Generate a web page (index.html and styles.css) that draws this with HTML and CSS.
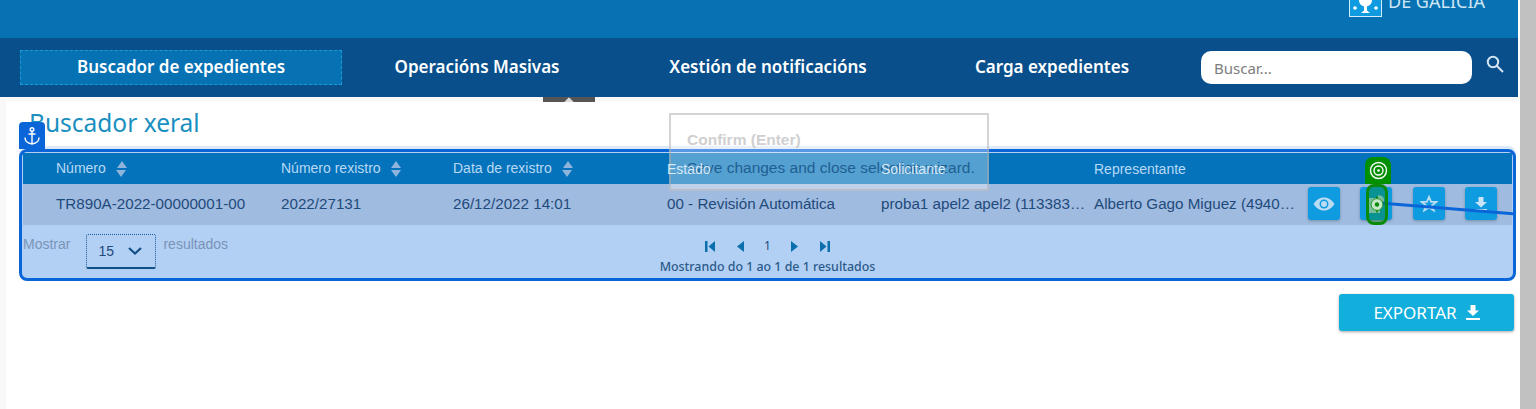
FILE: index.html
```html
<!DOCTYPE html>
<html lang="en">
<head>
    <meta charset="UTF-8">
    <meta name="viewport" content="width=device-width, initial-scale=1.0">
    <title>Buscador xeral</title>
    <link rel="stylesheet" href="styles.css">
</head>
<body>
    <div class="app">
        <div class="page">
            <header class="topbar">
                <svg class="logo" width="33" height="17" viewBox="0 0 33 17">
                    <rect x="0.5" y="-8" width="32" height="24.5" fill="#0f9be0" stroke="#d5ecf8"/>
                    <path d="M10 0h13c0 4-2.500 5.500-5 6.500v4l3 2.500h-9l3-2.500v-4C12.500 5.500 10 4 10 0z" fill="#fff"/>
                    <path d="M4 8h4M6 6v4M25 8h4M27 6v4" stroke="#fff" stroke-width="1.300"/>
                </svg>
                <span class="logo-text">DE GALICIA</span>
            </header>

            <nav class="mainnav">
                <a class="nav-item nav-active" href="#">Buscador de expedientes</a>
                <a class="nav-item nav-second" href="#">Operacións Masivas</a>
                <a class="nav-item nav-third" href="#">Xestión de notificacións</a>
                <a class="nav-item nav-fourth" href="#">Carga expedientes</a>
                <div class="search">
                    <input class="search-input" type="text" placeholder="Buscar...">
                    <svg class="search-icon" width="18" height="18" viewBox="0 0 18 18" fill="none" stroke="#d6e6f2" stroke-width="2">
                        <circle cx="7" cy="7" r="5.200"/>
                        <path d="M11 11l6 6"/>
                    </svg>
                </div>
            </nav>
            <div class="tab-handle"><span class="tab-handle-mark"></span></div>

            <div class="shell">
                <main class="content">
                    <h1 class="title">Buscador xeral</h1>
                    <div class="results">
                        <div class="anchor-badge">
                            <svg width="18" height="20" viewBox="0 0 18 20" fill="none" stroke="#fff" stroke-width="1.400">
                                <circle cx="9" cy="3.500" r="1.800"/>
                                <path d="M9 5.500V18M5.500 8h7M2 11.500c0 4 3.500 6 7 6.500 3.500-.5 7-2.500 7-6.500"/>
                            </svg>
                        </div>
                        <table class="grid">
                            <colgroup>
                                <col class="col-num">
                                <col class="col-reg">
                                <col class="col-date">
                                <col class="col-state">
                                <col class="col-sol">
                                <col class="col-rep">
                                <col class="col-actions">
                            </colgroup>
                            <thead>
                                <tr>
                                    <th class="first">Número <span class="sort"></span></th>
                                    <th>Número rexistro <span class="sort"></span></th>
                                    <th>Data de rexistro <span class="sort"></span></th>
                                    <th><span class="over-tour">Estado</span></th>
                                    <th><span class="over-tour">Solicitante</span></th>
                                    <th>Representante</th>
                                    <th></th>
                                </tr>
                            </thead>
                            <tbody>
                                <tr>
                                    <td class="first">TR890A-2022-00000001-00</td>
                                    <td>2022/27131</td>
                                    <td>26/12/2022 14:01</td>
                                    <td>00 - Revisión Automática</td>
                                    <td class="cut">proba1 apel2 apel2 (11338345K)</td>
                                    <td class="cut cut-rep">Alberto Gago Miguez (49401234)</td>
                                    <td>
                                        <div class="actions">
                                            <button class="act" type="button">
                                                <svg width="22" height="14" viewBox="0 0 22 14">
                                                    <path d="M0.500 7C4 1.800 7.500 0.500 11 0.500S18 1.800 21.500 7C18 12.200 14.500 13.500 11 13.500S4 12.200 0.500 7z" fill="#b9dcf3"/>
                                                    <circle cx="11" cy="7" r="4.500" fill="#0f9be0"/>
                                                    <circle cx="11" cy="7" r="3" fill="#b9dcf3"/>
                                                </svg>
                                            </button>
                                            <button class="act" type="button">
                                                <svg width="20" height="20" viewBox="0 0 20 20">
                                                    <path d="M1 4h13v15H1zM12 1.500a5 5 0 0 1 6 6l-6 2z" fill="#b9dcf3"/>
                                                </svg>
                                            </button>
                                            <button class="act" type="button">
                                                <svg width="18" height="18" viewBox="0 0 18 18">
                                                    <path d="M9 1.800l2.100 5h5.400l-4.300 3.400 1.600 5.300L9 12.400l-4.800 3.100 1.600-5.300L1.500 6.800h5.400z" fill="none" stroke="#b9dcf3" stroke-width="1.800"/>
                                                </svg>
                                            </button>
                                            <button class="act" type="button">
                                                <svg width="14" height="14" viewBox="0 0 14 14">
                                                    <path d="M4.500 0h5v5H13L7 10.500 1 5h3.500zM1 12h12v1.500H1z" fill="#c9e4f6"/>
                                                </svg>
                                            </button>
                                        </div>
                                    </td>
                                </tr>
                            </tbody>
                        </table>
                        <div class="grid-foot">
                            <div class="length">
                                <span>Mostrar</span>
                                <div class="length-select">
                                    15
                                    <svg width="14" height="8" viewBox="0 0 14 8" fill="none" stroke="#124f86" stroke-width="2.200">
                                        <path d="M1 1l6 5.500L13 1"/>
                                    </svg>
                                </div>
                                <span>resultados</span>
                            </div>
                            <div class="paging">
                                <div class="pager">
                                    <svg width="11" height="11" viewBox="0 0 11 11"><path d="M0 0h2.500v11H0zM10 0v11L3.500 5.500z" fill="#0b6fae"/></svg>
                                    <svg width="9" height="11" viewBox="0 0 9 11"><path d="M8 0v11L1 5.500z" fill="#0b6fae"/></svg>
                                    <span class="pager-num">1</span>
                                    <svg width="9" height="11" viewBox="0 0 9 11"><path d="M1 0v11l7-5.500z" fill="#0b6fae"/></svg>
                                    <svg width="11" height="11" viewBox="0 0 11 11"><path d="M1 0v11l6.500-5.500zM8.500 0H11v11H8.500z" fill="#0b6fae"/></svg>
                                </div>
                                <div class="paging-info">Mostrando do 1 ao 1 de 1 resultados</div>
                            </div>
                        </div>
                    </div>
                    <div class="export-row">
                        <button class="export" type="button">
                            EXPORTAR
                            <svg width="14" height="15" viewBox="0 0 14 15">
                                <path d="M4.500 0h5v5.500H13L7 11 1 5.500h3.500zM0 13h14v2H0z" fill="#fff"/>
                            </svg>
                        </button>
                    </div>
                </main>
            </div>
        </div>
        <div class="scrollbar"></div>

        <!-- guided tour layer, sits on top of the page -->
        <div class="tour-popup">
            <div class="tour-title">Confirm (Enter)</div>
            <div class="tour-text">Save changes and close selection wizard.</div>
        </div>
        <svg class="tour-line" width="1536" height="409" viewBox="0 0 1536 409">
            <path d="M1380 203L1516 214" stroke="#0a66d8" stroke-width="3"/>
        </svg>
        <div class="tour-hit">
            <svg width="19" height="19" viewBox="0 0 19 19">
                <path d="M9.500 0v3M9.500 16v3" stroke="#0a8a0a" stroke-width="2"/>
                <circle cx="9.500" cy="9.500" r="7" fill="#c5e8c8" stroke="#0a8a0a"/>
                <circle cx="9.500" cy="9.500" r="2.600" fill="#0a8a0a"/>
            </svg>
        </div>
        <div class="tour-tag">
            <svg width="19" height="19" viewBox="0 0 19 19" fill="none" stroke="#fff" stroke-width="1.400">
                <circle cx="9.500" cy="9.500" r="8"/>
                <circle cx="9.500" cy="9.500" r="4.500"/>
                <circle cx="9.500" cy="9.500" r="1.300" fill="#fff" stroke="none"/>
            </svg>
        </div>
    </div>
</body>
</html>
```

FILE: styles.css
```css
html, body {
    margin: 0;
    padding: 0;
    height: 100%;
    overflow: hidden;
}
body {
    font-family: "Liberation Sans", Arial, sans-serif;
    background-color: #fff;
}
.app {
    display: flex;
    height: 409px;
    position: relative;
    overflow: hidden;
}
.page {
    flex: 1;
    display: flex;
    flex-direction: column;
    min-width: 0;
    position: relative;
}
.scrollbar {
    width: 16px;
    margin-left: 2px;
    background-color: #c1c1c1;
}

/* header */
.topbar {
    height: 38px;
    box-sizing: border-box;
    background-color: #0672b4;
    display: flex;
    justify-content: flex-end;
    align-items: flex-start;
    gap: 6px;
    padding-right: 33px;
    overflow: hidden;
}
.logo {
    display: block;
}
.logo-text {
    font-family: "Noto Sans", sans-serif;
    font-size: 18px;
    line-height: 19px;
    color: #cfe5f3;
    margin-top: -8px;
}

/* nav */
.mainnav {
    height: 59px;
    box-sizing: border-box;
    background-color: #084f8b;
    display: flex;
    align-items: center;
    padding-left: 20px;
}
.nav-item {
    font-family: "Noto Sans", sans-serif;
    font-weight: 600;
    font-size: 17px;
    color: #fff;
    text-decoration: none;
    text-align: center;
    box-sizing: border-box;
    line-height: 33px;
    height: 35px;
}
.nav-active {
    width: 322px;
    line-height: 31px;
    background-color: #0672b4;
    border: 1px dashed #1a9ad6;
}
.nav-second {
    width: 270px;
}
.nav-third {
    width: 312px;
}
.nav-fourth {
    width: 256px;
}
.search {
    display: flex;
    align-items: flex-start;
    margin-left: 21px;
}
.search-input {
    width: 271px;
    height: 33px;
    box-sizing: border-box;
    border: none;
    border-radius: 10px;
    padding: 0 13px;
    background-color: #fff;
    font-family: "Noto Sans", sans-serif;
    font-size: 15px;
}
.search-input::placeholder {
    color: #7d7d7d;
    opacity: 1;
}
.search-icon {
    margin-left: 14px;
    margin-top: 4px;
}
.tab-handle {
    position: absolute;
    left: 543px;
    top: 97px;
    width: 52px;
    height: 5px;
    background-color: #555;
    overflow: hidden;
}
.tab-handle-mark {
    display: block;
    width: 8px;
    height: 8px;
    margin: 2px auto 0;
    background-color: #ddd;
    transform: rotate(45deg);
}

/* content */
.shell {
    flex: 1;
    background-color: #f8f8f8;
    padding: 4px 0 0 6px;
    display: flex;
    min-height: 0;
}
.content {
    flex: 1;
    background-color: #fff;
    padding: 0 2px 0 13px;
    min-width: 0;
}
.title {
    font-family: "Noto Sans", sans-serif;
    font-weight: 400;
    font-size: 24.5px;
    line-height: 34px;
    color: #1a8fc0;
    margin: 5px 0 9px 10px;
}
.results {
    position: relative;
    border: 3px solid #0a66d8;
    border-radius: 8px;
    background-color: #b2d0f4;
    box-shadow: 0 -3px 0 #dce9f9;
    height: 132px;
    box-sizing: border-box;
    padding: 1px;
}
.anchor-badge {
    position: absolute;
    left: -3px;
    top: -30px;
    width: 26px;
    height: 27px;
    background-color: #0a66d8;
    border-radius: 4px 4px 0 0;
    display: flex;
    align-items: center;
    justify-content: center;
}
.grid {
    width: 100%;
    table-layout: fixed;
    border-collapse: collapse;
    font-size: 14px;
}
.col-num { width: 258px; }
.col-reg { width: 172px; }
.col-date { width: 214px; }
.col-state { width: 214px; }
.col-sol { width: 213px; }
.col-rep { width: 214px; }
th {
    background-color: #0473bb;
    color: #b8d9f5;
    font-weight: 400;
    text-align: left;
    height: 31px;
    padding: 0 14px 0 0;
}
.over-tour {
    position: relative;
    z-index: 1;
    color: #d8e9f8;
}
td {
    background-color: #9fbbdf;
    color: #1f4a7c;
    font-size: 15.2px;
    height: 41px;
    padding: 0 14px 2px 0;
    box-sizing: border-box;
}
.first {
    padding-left: 33px;
}
.cut {
    white-space: nowrap;
    overflow: hidden;
    text-overflow: ellipsis;
    padding-right: 1px;
}
.cut-rep {
    padding-right: 8px;
}
.sort {
    display: inline-block;
    vertical-align: middle;
    margin-left: 7px;
    width: 0;
    height: 0;
    position: relative;
    border-left: 5.5px solid transparent;
    border-right: 5.5px solid transparent;
    border-bottom: 7px solid #8fb4dc;
    margin-bottom: 9px;
}
.sort::after {
    content: "";
    position: absolute;
    left: -5.5px;
    top: 9px;
    border-left: 5.5px solid transparent;
    border-right: 5.5px solid transparent;
    border-top: 7px solid #8fb4dc;
}
.actions {
    display: flex;
    gap: 20.4px;
}
.act {
    flex: none;
    width: 32px;
    height: 33px;
    padding: 0;
    border: none;
    border-radius: 3px;
    background-color: #0f9be0;
    box-shadow: 0 1px 3px rgba(0, 0, 0, 0.25);
    display: flex;
    align-items: center;
    justify-content: center;
}

/* table foot */
.grid-foot {
    position: relative;
    display: flex;
    justify-content: center;
}
.length {
    position: absolute;
    left: 0;
    top: 9px;
    display: flex;
    align-items: flex-start;
    font-size: 14px;
    line-height: 20px;
    color: #7a94b8;
}
.length-select {
    width: 70px;
    height: 35px;
    box-sizing: border-box;
    margin: 0 7px 0 16px;
    padding: 0 13px 0 11px;
    border: 1px dotted #1a5a9a;
    border-bottom: 2px solid #124f86;
    border-radius: 2px;
    color: #1f4a7c;
    line-height: 34px;
    display: flex;
    align-items: center;
    justify-content: space-between;
}
.paging {
    padding-top: 14px;
    text-align: center;
}
.pager {
    display: flex;
    align-items: center;
    justify-content: center;
    gap: 19.5px;
    height: 14px;
}
.pager-num {
    font-family: "Noto Sans", sans-serif;
    font-size: 12px;
    line-height: 14px;
    color: #1f4a7c;
}
.paging-info {
    font-family: "Noto Sans", sans-serif;
    font-weight: 500;
    font-size: 12.4px;
    line-height: 16px;
    color: #2b5a8a;
    margin-top: 6px;
}

/* export */
.export-row {
    display: flex;
    justify-content: flex-end;
    margin-top: 13px;
    padding-right: 2px;
}
.export {
    width: 175px;
    height: 37px;
    border: none;
    border-radius: 3px;
    background-color: #12afdc;
    box-shadow: 0 1px 3px rgba(0, 0, 0, 0.35);
    color: #fff;
    font-family: "Noto Sans", sans-serif;
    font-size: 17px;
    display: flex;
    align-items: center;
    justify-content: center;
    gap: 9px;
}

/* tour layer */
.tour-popup {
    position: absolute;
    left: 669px;
    top: 113px;
    width: 320px;
    height: 78px;
    box-sizing: border-box;
    border: 2px solid rgba(170, 170, 170, 0.5);
    background-color: rgba(255, 255, 255, 0.32);
    padding: 15px 0 0 16px;
    font-size: 15.5px;
}
.tour-title {
    font-weight: 700;
    color: #cfcfcf;
    line-height: 20px;
}
.tour-text {
    color: #1f5f92;
    line-height: 20px;
    margin-top: 8px;
    white-space: nowrap;
}
.tour-line {
    position: absolute;
    left: 0;
    top: 0;
    pointer-events: none;
}
.tour-hit {
    position: absolute;
    left: 1366px;
    top: 184px;
    width: 22px;
    height: 41px;
    box-sizing: border-box;
    border: 3px solid #0a8a0a;
    border-radius: 8px;
    background-color: rgba(0, 128, 0, 0.35);
    display: flex;
    align-items: center;
    justify-content: center;
}
.tour-tag {
    position: absolute;
    left: 1365px;
    top: 157px;
    width: 26px;
    height: 27px;
    background-color: #008f00;
    border-radius: 8px 8px 0 0;
    display: flex;
    align-items: center;
    justify-content: center;
}
```
